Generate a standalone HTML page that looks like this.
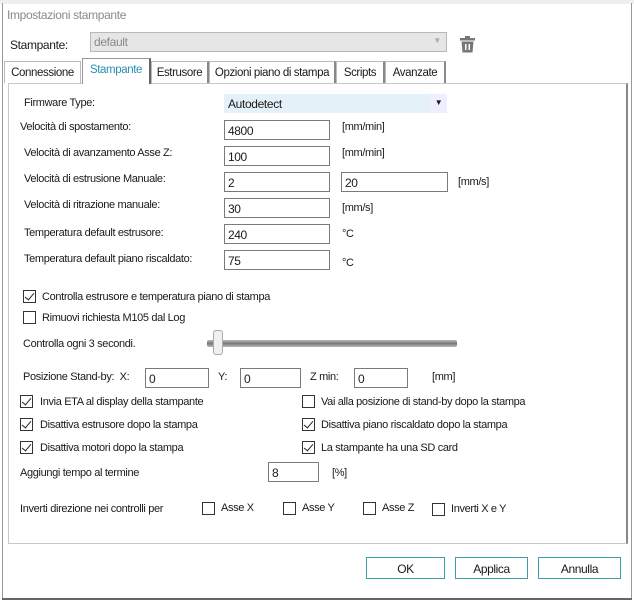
<!DOCTYPE html>
<html><head><meta charset="utf-8"><style>
*{box-sizing:border-box}
body{margin:0;width:634px;height:602px;background:#fff;position:relative;overflow:hidden;font-family:"Liberation Sans",sans-serif;font-size:11px;letter-spacing:-0.35px;color:#1a1a1a}
.a{position:absolute;white-space:nowrap}
.in{position:absolute;border:1px solid #7a7a7a;background:#fff;height:20px;padding:3px 0 0 3px;font-size:12px;letter-spacing:-0.4px}
.cb{position:absolute;width:13px;height:13px;border:1px solid #333;background:#fff}
.cb.c::after{content:"";position:absolute;left:3px;top:0px;width:4px;height:8px;border:solid #222;border-width:0 1.4px 1.4px 0;transform:rotate(40deg)}
.tab{position:absolute;top:61px;height:22px;border:1px solid #bbb;border-bottom:none;background:#fff;padding:5px 0 0 0;text-align:center;font-size:11.5px;letter-spacing:-0.4px}
.btn{position:absolute;top:557px;height:22px;border:1px solid #3a9fb0;background:#fff;text-align:center;padding-top:4px;font-size:12px;letter-spacing:-0.4px}
</style></head><body>
<div class="a" style="left:0;top:0;width:634px;height:4px;background:#eee"></div>
<div class="a" style="left:2px;top:3px;width:1px;height:597px;background:#999"></div>
<div class="a" style="left:631px;top:3px;width:1px;height:597px;background:#999"></div>
<div class="a" style="left:2px;top:598px;width:630px;height:2px;background:#666"></div>
<div class="a" style="left:7px;top:8px;color:#8a8a8a;font-size:12px">Impostazioni stampante</div>
<div class="a" style="left:10px;top:38px;font-size:12px">Stampante:</div>
<div class="a" style="left:90px;top:32px;width:357px;height:20px;background:#e6e6e6;border:1px solid #b8b8b8;color:#888;padding:2px 0 0 3px;font-size:12px">default<span style="position:absolute;right:5px;top:3px;font-size:8px;color:#aaa">▼</span></div>
<svg class="a" style="left:460px;top:36px" width="15" height="17" viewBox="0 0 15 17"><rect x="5" y="0" width="5" height="2" fill="#777"/><rect x="0" y="2" width="15" height="2.5" fill="#777"/><path d="M1.5 5.5h12l-1 11h-10z" fill="#777"/><rect x="5" y="8" width="1.5" height="6" fill="#fff"/><rect x="8.5" y="8" width="1.5" height="6" fill="#fff"/></svg>
<div class="a" style="left:8px;top:83px;width:620px;height:461px;border:1px solid #c8c8c8;border-right:2px solid #888"></div>
<div class="tab" style="left:4px;width:77px">Connessione</div>
<div class="tab" style="left:82px;top:58px;height:26px;width:69px;color:#2a8fb5;border-color:#999;border-right:2px solid #666;z-index:2">Stampante</div>
<div class="tab" style="left:151px;width:58px;border-right:2px solid #888">Estrusore</div>
<div class="tab" style="left:209px;width:127px;border-right:2px solid #888">Opzioni piano di stampa</div>
<div class="tab" style="left:336px;width:49px;border-right:2px solid #888">Scripts</div>
<div class="tab" style="left:385px;width:61px;border-right:2px solid #888">Avanzate</div>

<div class="a" style="left:24px;top:97px">Firmware Type:</div>
<div class="a" style="left:224px;top:94px;width:223px;height:19px;background:#e5f1f8;padding:3px 0 0 4px;font-size:12px">Autodetect<span style="position:absolute;right:0;top:0;width:17px;height:19px;background:#eef;font-size:8px;text-align:center;padding-top:4px">▼</span></div>

<div class="a" style="left:20px;top:121px">Velocità di spostamento:</div>
<div class="in" style="left:224px;top:120px;width:106px">4800</div><div class="a" style="left:342px;top:121px">[mm/min]</div>
<div class="a" style="left:24px;top:147px">Velocità di avanzamento Asse Z:</div>
<div class="in" style="left:224px;top:146px;width:106px">100</div><div class="a" style="left:342px;top:147px">[mm/min]</div>
<div class="a" style="left:24px;top:173px">Velocità di estrusione Manuale:</div>
<div class="in" style="left:224px;top:172px;width:106px">2</div><div class="in" style="left:341px;top:172px;width:107px">20</div><div class="a" style="left:458px;top:176px">[mm/s]</div>
<div class="a" style="left:24px;top:199px">Velocità di ritrazione manuale:</div>
<div class="in" style="left:224px;top:198px;width:106px">30</div><div class="a" style="left:342px;top:202px">[mm/s]</div>
<div class="a" style="left:24px;top:227px">Temperatura default estrusore:</div>
<div class="in" style="left:224px;top:224px;width:106px">240</div><div class="a" style="left:342px;top:228px">°C</div>
<div class="a" style="left:24px;top:253px">Temperatura default piano riscaldato:</div>
<div class="in" style="left:224px;top:250px;width:106px">75</div><div class="a" style="left:342px;top:257px">°C</div>

<div class="cb c" style="left:23px;top:290px"></div><div class="a" style="left:42px;top:291px">Controlla estrusore e temperatura piano di stampa</div>
<div class="cb" style="left:23px;top:311px"></div><div class="a" style="left:42px;top:312px">Rimuovi richiesta M105 dal Log</div>
<div class="a" style="left:23px;top:338px">Controlla ogni 3 secondi.</div>
<div class="a" style="left:207px;top:340px;width:250px;height:7px;background:linear-gradient(#bbb,#777,#bbb);border-radius:2px"></div>
<div class="a" style="left:213px;top:330px;width:10px;height:25px;background:#f0f0f0;border:1px solid #aaa;border-radius:3px"></div>

<div class="a" style="left:23px;top:371px">Posizione Stand-by:&nbsp; X:</div>
<div class="in" style="left:145px;top:368px;width:64px">0</div>
<div class="a" style="left:218px;top:371px">Y:</div>
<div class="in" style="left:240px;top:368px;width:61px">0</div>
<div class="a" style="left:310px;top:371px">Z min:</div>
<div class="in" style="left:354px;top:368px;width:54px">0</div>
<div class="a" style="left:432px;top:371px">[mm]</div>

<div class="cb c" style="left:20px;top:395px"></div><div class="a" style="left:40px;top:396px">Invia ETA al display della stampante</div>
<div class="cb" style="left:302px;top:395px"></div><div class="a" style="left:321px;top:396px">Vai alla posizione di stand-by dopo la stampa</div>
<div class="cb c" style="left:20px;top:418px"></div><div class="a" style="left:40px;top:419px">Disattiva estrusore dopo la stampa</div>
<div class="cb c" style="left:302px;top:418px"></div><div class="a" style="left:321px;top:419px">Disattiva piano riscaldato dopo la stampa</div>
<div class="cb c" style="left:20px;top:441px"></div><div class="a" style="left:40px;top:442px">Disattiva motori dopo la stampa</div>
<div class="cb c" style="left:302px;top:441px"></div><div class="a" style="left:321px;top:442px">La stampante ha una SD card</div>

<div class="a" style="left:20px;top:467px">Aggiungi tempo al termine</div>
<div class="in" style="left:268px;top:462px;width:51px">8</div><div class="a" style="left:332px;top:467px">[%]</div>

<div class="a" style="left:20px;top:503px">Inverti direzione nei controlli per</div>
<div class="cb" style="left:202px;top:502px"></div><div class="a" style="left:221px;top:502px">Asse X</div>
<div class="cb" style="left:283px;top:502px"></div><div class="a" style="left:302px;top:502px">Asse Y</div>
<div class="cb" style="left:363px;top:502px"></div><div class="a" style="left:382px;top:502px">Asse Z</div>
<div class="cb" style="left:432px;top:503px"></div><div class="a" style="left:451px;top:503px">Inverti X e Y</div>

<div class="btn" style="left:366px;width:79px">OK</div>
<div class="btn" style="left:455px;width:73px">Applica</div>
<div class="btn" style="left:538px;width:83px">Annulla</div>
</body></html>
